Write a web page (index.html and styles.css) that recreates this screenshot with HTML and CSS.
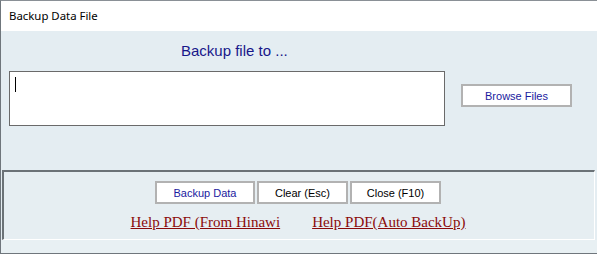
FILE: index.html
```
<!DOCTYPE html>
<html lang="en">
<head>
    <meta charset="UTF-8">
    <title>Backup Data File</title>
    <link rel="stylesheet" href="styles.css">
</head>
<body>
    <div class="window">
        <div class="titlebar">Backup Data File</div>

        <div class="content">
            <p class="heading">Backup file to ...</p>
            <div class="row">
                <div class="path-box"><span class="caret"></span></div>
                <button class="button browse">Browse Files</button>
            </div>
        </div>

        <div class="footer">
            <div class="actions">
                <button class="button action primary">Backup Data</button>
                <button class="button action">Clear (Esc)</button>
                <button class="button action">Close (F10)</button>
            </div>
            <div class="links">
                <a class="help-link" href="#">Help PDF (From Hinawi</a>
                <a class="help-link" href="#">Help PDF(Auto BackUp)</a>
            </div>
        </div>
        <div class="statusbar"></div>
    </div>
</body>
</html>
```

FILE: styles.css
```
body {
    margin: 0;
    padding: 0;
    background-color: #e6eef2;
    font-family: 'Liberation Sans', Arial, sans-serif;
}

.window {
    width: 597px;
    height: 254px;
    box-sizing: border-box;
    border-left: 1px solid #6f767c;
    border-top: 1px solid #8a9096;
    border-bottom: 1px solid #6f767c;
    display: flex;
    flex-direction: column;
    background-color: #e4edf2;
}

.titlebar {
    height: 30px;
    background-color: #ffffff;
    padding-left: 8px;
    font-family: 'Noto Sans', sans-serif;
    font-size: 11.4px;
    line-height: 30px;
    color: #000000;
}

.content {
    height: 139px;
    background-color: #e4edf2;
}

.heading {
    margin: 10px 0 0 180px;
    font-size: 15px;
    color: #17178a;
    height: 20px;
    line-height: 20px;
}

.row {
    display: flex;
    align-items: center;
    margin-top: 10px;
    padding-left: 8px;
}

.path-box {
    width: 436px;
    height: 55px;
    box-sizing: border-box;
    border: 1px solid #6a6a6a;
    background-color: #ffffff;
    padding: 5px 0 0 5px;
}

.caret {
    display: block;
    width: 1px;
    height: 15px;
    background-color: #000000;
}

.button {
    background-color: #ffffff;
    border: 2px solid #b2b2b2;
    font-family: 'Liberation Sans', Arial, sans-serif;
    font-size: 11px;
    color: #000000;
    padding: 0;
    cursor: pointer;
}

.browse {
    width: 111px;
    height: 23px;
    margin-left: 16px;
    margin-top: -6px;
    color: #1a1aa0;
}

.footer {
    height: 70px;
    box-sizing: border-box;
    border-top: 2px solid #6b7277;
    border-left: 2px solid #6b7277;
    border-right: 1px solid #ffffff;
    border-bottom: 1px solid #ffffff;
    background-color: #e6eef2;
    margin-left: 1px;
    margin-right: 2px;
    display: flex;
    flex-direction: column;
    align-items: center;
}

.actions {
    display: flex;
    gap: 2px;
    margin-top: 9px;
    margin-left: -2px;
}

.action {
    width: 100px;
    height: 23px;
}

.action + .action {
    width: 91px;
}

.primary {
    color: #1a1aa0;
}

.links {
    display: flex;
    gap: 32px;
    margin-top: 10px;
    margin-left: -2px;
}

.help-link {
    font-family: 'Liberation Serif', 'Times New Roman', serif;
    font-size: 15px;
    color: #8b0a0a;
    text-decoration: underline;
}

.statusbar {
    flex: 1;
    background-color: #e8f0f3;
}
```
